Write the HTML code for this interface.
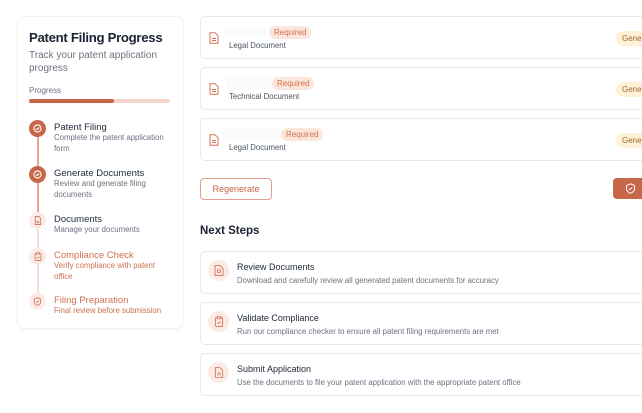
<!DOCTYPE html>
<html><head><meta charset="utf-8"><style>
*{box-sizing:border-box;margin:0;padding:0}
body{width:642px;height:413px;overflow:hidden;background:#fff;font-family:"Liberation Sans",sans-serif;position:relative;color:#1f2937}
.side{position:absolute;left:17px;top:16px;width:167px;height:313px;border:1px solid #f1f1f1;border-radius:8px;box-shadow:0 1px 3px rgba(0,0,0,.04)}
.t{position:absolute;left:29px;top:30px;font-size:13.2px;letter-spacing:-0.3px;font-weight:bold;color:#1a2233}
.st{position:absolute;left:29px;top:49px;font-size:10px;line-height:13px;color:#6b7280;width:140px}
.pl{position:absolute;left:29px;top:86px;font-size:8px;color:#6b7280}
.bar{position:absolute;left:29px;top:99px;width:141px;height:4px;border-radius:2px;background:#f5d6cc}
.bar i{display:block;width:85px;height:4px;border-radius:2px;background:#c8664a}
.line{position:absolute;left:36.5px;width:2px}
.c{position:absolute;left:29px;width:17px;height:17px;border-radius:50%;display:flex;align-items:center;justify-content:center}
.done{background:#c8664a}
.pend{background:#fbeae5}
.sl{position:absolute;left:54px;font-size:9.5px;color:#1f2937}
.sd{position:absolute;left:54px;font-size:7.8px;line-height:10.5px;color:#6b7280;width:120px}
.o{color:#d0704f!important}
.card{position:absolute;left:200px;width:460px;height:43px;border:1px solid #e8e8e8;border-radius:5px}
.req{position:absolute;font-size:8px;color:#d0704f;background:#fbe6dc;border-radius:8px;padding:2px 5px}
.dt{position:absolute;left:229px;font-size:7.8px;color:#4b5563}
.gen{position:absolute;left:616px;font-size:8px;color:#a16a2a;background:#fdf1d8;border-radius:8px;padding:3px 6px}
.blur{position:absolute;height:12px;background:#fbfbfb;border-radius:4px}
.btn{position:absolute;left:200px;top:178px;width:72px;height:22px;border:1px solid #e3a08a;border-radius:4px;font-size:9px;color:#c8664a;display:flex;align-items:center;justify-content:center}
.btn2{position:absolute;left:613px;top:178px;width:40px;height:21px;background:#c8664a;border-radius:4px}
.h{position:absolute;left:200px;top:225px;font-size:11.5px;font-weight:bold;color:#1a2233}
.ic{position:absolute;left:208px;width:21px;height:21px;border-radius:50%;background:#fbeae5;display:flex;align-items:center;justify-content:center}
.nt{position:absolute;left:237px;font-size:9px;color:#1f2937}
.nd{position:absolute;left:237px;font-size:7.8px;color:#6b7280}
</style></head><body>
<div class="side"></div>
<div class="t">Patent Filing Progress</div>
<div class="st">Track your patent application progress</div>
<div class="pl">Progress</div>
<div class="bar"><i></i></div>
<div class="line" style="top:136px;height:30px;background:#e4a592"></div>
<div class="line" style="top:182px;height:30px;background:#e4a592"></div>
<div class="line" style="top:228px;height:70px;background:#f5ddd5"></div>
<div class="c done" style="top:120px"><svg width="9" height="9" viewBox="0 0 10 10"><circle cx="5" cy="5" r="4" fill="none" stroke="#fff" stroke-width="1.2"/><path d="M3.2 5.1l1.3 1.2 2.3-2.4" fill="none" stroke="#fff" stroke-width="1.2"/></svg></div>
<div class="c done" style="top:166px"><svg width="9" height="9" viewBox="0 0 10 10"><circle cx="5" cy="5" r="4" fill="none" stroke="#fff" stroke-width="1.2"/><path d="M3.2 5.1l1.3 1.2 2.3-2.4" fill="none" stroke="#fff" stroke-width="1.2"/></svg></div>
<div class="c pend" style="top:212px"><svg width="8" height="9" viewBox="0 0 8 10"><path d="M1 .5h4l2 2v7H1z" fill="none" stroke="#d0704f" stroke-width=".9"/><path d="M2.5 6h3M2.5 7.5h3" stroke="#d0704f" stroke-width=".8"/></svg></div>
<div class="c pend" style="top:248px"><svg width="8" height="9" viewBox="0 0 8 10"><rect x=".7" y="1.5" width="6.6" height="8" rx="1" fill="none" stroke="#d0704f" stroke-width=".9"/><rect x="2.5" y=".5" width="3" height="2" fill="#fbeae5" stroke="#d0704f" stroke-width=".8"/><path d="M2.5 6l1 1 2-2" fill="none" stroke="#d0704f" stroke-width=".8"/></svg></div>
<div class="c pend" style="top:293px"><svg width="9" height="9" viewBox="0 0 10 10"><path d="M5 .8l3.6 1.4v3C8.6 7.3 7 8.6 5 9.3 3 8.6 1.4 7.3 1.4 5.2v-3z" fill="none" stroke="#d0704f" stroke-width=".9"/><path d="M3.5 5l1 1 2-2" fill="none" stroke="#d0704f" stroke-width=".8"/></svg></div>
<div class="sl" style="top:122px">Patent Filing</div>
<div class="sd" style="top:133px">Complete the patent application form</div>
<div class="sl" style="top:168px">Generate Documents</div>
<div class="sd" style="top:179px">Review and generate filing documents</div>
<div class="sl" style="top:214px">Documents</div>
<div class="sd" style="top:225px">Manage your documents</div>
<div class="sl o" style="top:250px">Compliance Check</div>
<div class="sd o" style="top:261px">Verify compliance with patent office</div>
<div class="sl o" style="top:295px">Filing Preparation</div>
<div class="sd o" style="top:306px">Final review before submission</div>

<div class="card" style="top:16px"></div>
<div class="card" style="top:67px"></div>
<div class="card" style="top:118px"></div>
<svg style="position:absolute;left:209px;top:32px" width="10" height="12" viewBox="0 0 10 12"><path d="M1 .7h5l3 3v7.6H1z" fill="none" stroke="#d0704f" stroke-width="1"/><path d="M3 6.5h4M3 8.5h4" stroke="#d0704f" stroke-width=".9"/></svg>
<svg style="position:absolute;left:209px;top:83px" width="10" height="12" viewBox="0 0 10 12"><path d="M1 .7h5l3 3v7.6H1z" fill="none" stroke="#d0704f" stroke-width="1"/><path d="M3 6.5h4M3 8.5h4" stroke="#d0704f" stroke-width=".9"/></svg>
<svg style="position:absolute;left:209px;top:134px" width="10" height="12" viewBox="0 0 10 12"><path d="M1 .7h5l3 3v7.6H1z" fill="none" stroke="#d0704f" stroke-width="1"/><path d="M3 6.5h4M3 8.5h4" stroke="#d0704f" stroke-width=".9"/></svg>
<div class="blur" style="left:225px;top:26px;width:42px"></div>
<div class="blur" style="left:226px;top:77px;width:45px"></div>
<div class="blur" style="left:222px;top:127px;width:60px"></div>
<div class="req" style="left:269px;top:26px">Required</div>
<div class="req" style="left:272px;top:77px">Required</div>
<div class="req" style="left:281px;top:128px">Required</div>
<div class="dt" style="top:41px">Legal Document</div>
<div class="dt" style="top:92px">Technical Document</div>
<div class="dt" style="top:143px">Legal Document</div>
<div class="gen" style="top:31px">Generated</div>
<div class="gen" style="top:82px">Generated</div>
<div class="gen" style="top:133px">Generated</div>
<div class="btn">Regenerate</div>
<div class="btn2"><svg style="position:absolute;left:12px;top:5px" width="11" height="11" viewBox="0 0 10 10"><path d="M5 .8l3.6 1.4v3C8.6 7.3 7 8.6 5 9.3 3 8.6 1.4 7.3 1.4 5.2v-3z" fill="none" stroke="#fff" stroke-width=".9"/><path d="M3.5 5l1 1 2-2" fill="none" stroke="#fff" stroke-width=".8"/></svg></div>
<div class="h">Next Steps</div>
<div class="card" style="top:251px"></div>
<div class="card" style="top:302px"></div>
<div class="card" style="top:353px"></div>
<div class="ic" style="top:260px"><svg width="10" height="11" viewBox="0 0 10 11"><path d="M1 .6h5l3 3v6.8H1z" fill="none" stroke="#d0704f" stroke-width=".9"/><circle cx="5" cy="6.3" r="1.6" fill="none" stroke="#d0704f" stroke-width=".8"/></svg></div>
<div class="ic" style="top:311px"><svg width="10" height="11" viewBox="0 0 8 10"><rect x=".7" y="1.5" width="6.6" height="8" rx="1" fill="none" stroke="#d0704f" stroke-width=".8"/><rect x="2.5" y=".5" width="3" height="2" fill="#fbeae5" stroke="#d0704f" stroke-width=".7"/><path d="M2.5 6l1 1 2-2" fill="none" stroke="#d0704f" stroke-width=".7"/></svg></div>
<div class="ic" style="top:362px"><svg width="10" height="11" viewBox="0 0 10 12"><path d="M1 .7h5l3 3v7.6H1z" fill="none" stroke="#d0704f" stroke-width=".9"/><path d="M3 6.5h4M3 8.5h4" stroke="#d0704f" stroke-width=".8"/></svg></div>
<div class="nt" style="top:262px">Review Documents</div>
<div class="nd" style="top:276px">Download and carefully review all generated patent documents for accuracy</div>
<div class="nt" style="top:313px">Validate Compliance</div>
<div class="nd" style="top:327px">Run our compliance checker to ensure all patent filing requirements are met</div>
<div class="nt" style="top:364px">Submit Application</div>
<div class="nd" style="top:378px">Use the documents to file your patent application with the appropriate patent office</div>
</body></html>
